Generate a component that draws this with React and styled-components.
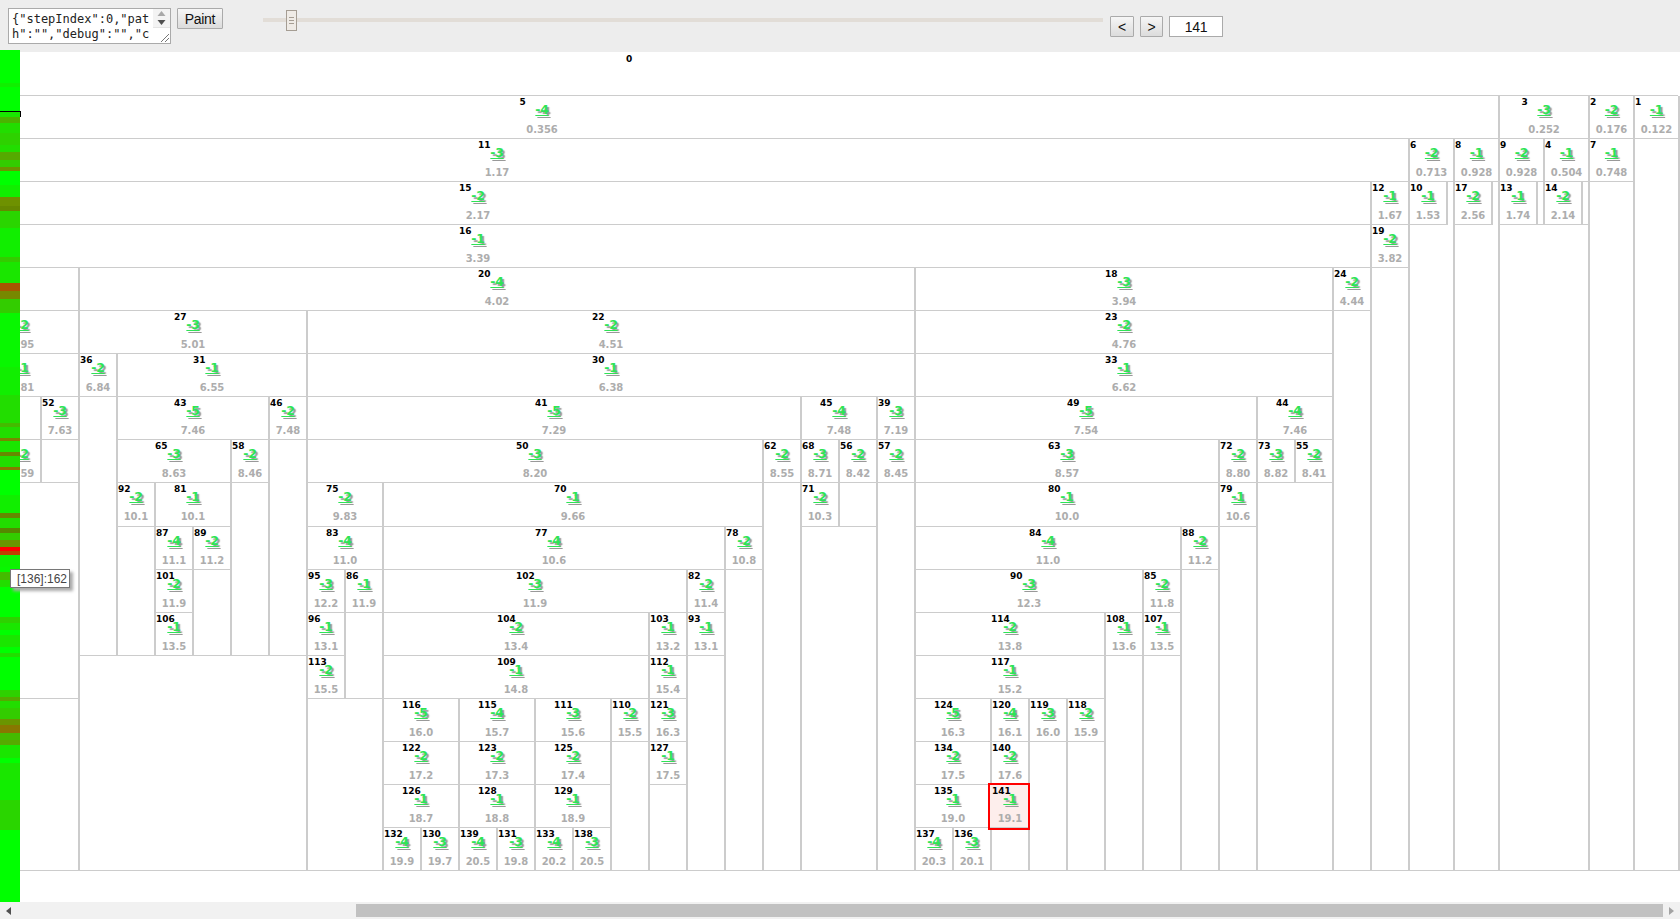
import React from 'react';
import styled, { createGlobalStyle } from 'styled-components';

const GlobalStyle = createGlobalStyle`
  html, body {
    margin: 0;
    padding: 0;
    overflow: hidden;
    background: #fff;
    font-family: "Liberation Sans", Arial, sans-serif;
  }
`;

const LINE = '#cccccc';

const Page = styled.div`
  position: relative;
  display: flex;
  flex-direction: column;
  width: 1680px;
  height: 919px;
  overflow: hidden;
`;

/* ---------- top toolbar ---------- */

const Toolbar = styled.div`
  flex: 0 0 52px;
  display: flex;
  align-items: flex-start;
  box-sizing: border-box;
  padding: 8px 0 0 8px;
  background: #ededed;
`;

const StateBox = styled.div`
  display: flex;
  box-sizing: border-box;
  width: 163px;
  height: 36px;
  border: 1px solid #aaa;
  background: #fff;
`;

const StateText = styled.textarea`
  flex: 1;
  min-width: 0;
  margin: 0;
  padding: 3px 0 0 3px;
  border: 0;
  outline: 0;
  resize: none;
  overflow: hidden;
  font: 12px/15px "DejaVu Sans Mono", monospace;
  color: #222;
  word-break: break-all;
`;

const StateScroll = styled.div`
  flex: 0 0 17px;
  display: flex;
  flex-direction: column;
  background: #f3f3f3;
`;

const ScrollArrows = styled.div`
  flex: 0 0 18px;
  display: flex;
  align-items: center;
  justify-content: center;
  border-bottom: 1px solid #e4e4e4;
`;

const Grip = styled.div`
  flex: 1;
  display: flex;
  align-items: flex-end;
  justify-content: flex-end;
  background: #fff;
`;

const Button = styled.button`
  box-sizing: border-box;
  width: ${p => p.$w}px;
  height: ${p => p.$h}px;
  margin: ${p => p.$top || 0}px 0 0 ${p => p.$left}px;
  padding: 0;
  border: 1px solid #aaa;
  border-radius: 1px;
  background: linear-gradient(#f6f6f6, #dcdcdc);
  color: #111;
  font: 14px "Liberation Sans", Arial, sans-serif;
  letter-spacing: -0.3px;
`;

const SliderTrack = styled.div`
  position: relative;
  width: 840px;
  height: 4px;
  margin: 10px 0 0 40px;
  background: #e2ddd7;
`;

const SliderThumb = styled.div`
  position: absolute;
  left: 23px;
  top: -8px;
  box-sizing: border-box;
  width: 11px;
  height: 21px;
  display: flex;
  flex-direction: column;
  align-items: center;
  justify-content: center;
  gap: 2px;
  border: 1px solid #a59d93;
  background: #efebe6;
`;

const ThumbLine = styled.span`
  width: 5px;
  height: 1px;
  background: #a59d93;
`;

const StepInput = styled.input`
  box-sizing: border-box;
  width: 54px;
  height: 21px;
  margin: 8px 0 0 6px;
  padding: 0;
  border: 1px solid #aaa;
  outline: 0;
  background: #fff;
  color: #111;
  text-align: center;
  font: 14px "Liberation Sans", Arial, sans-serif;
  letter-spacing: -0.3px;
`;

/* ---------- tree ---------- */

const Canvas = styled.div`
  flex: 1;
  min-height: 0;
  overflow: hidden;
  padding-top: 1px;
`;

const Tree = styled.div`
  margin-left: -416px;
  width: max-content;
`;

const Table = styled.div`
  display: flex;
  flex-direction: column;
  align-items: flex-start;
  width: max-content;
  min-width: 100%;
`;

const Label = styled.div`
  position: relative;
  box-sizing: border-box;
  align-self: stretch;
  flex: 0 0 43.055px;
  height: 43.055px;
  min-width: ${p => p.$min}px;
  padding-left: 2px;
  display: flex;
  justify-content: center;
  box-shadow: inset 0 -1px 0 ${LINE};
  ${p =>
    p.$selected &&
    `
    z-index: 2;
    background: #fdeeec;
    outline: 2px solid #f00;
    outline-offset: 0;
  `}
`;

const LabelBody = styled.div`
  position: relative;
  box-sizing: border-box;
  flex: 0 1 ${p => p.$min}px;
  min-width: 0;
  text-align: center;
`;

const NodeId = styled.span`
  position: absolute;
  left: 0;
  top: 2px;
  color: #000;
  font: bold 9px/9px "DejaVu Sans", Verdana, sans-serif;
  white-space: nowrap;
`;

const Score = styled.div`
  padding-top: 4px;
  height: 19px;
  color: #2ee455;
  font: bold 12.5px/19px "DejaVu Sans", Verdana, sans-serif;
  letter-spacing: -0.3px;
  text-decoration: underline;
  text-decoration-skip-ink: none;
  text-decoration-thickness: 1px;
  text-underline-offset: 1px;
  text-shadow: 2px 2px 1px #999;
  white-space: nowrap;
`;

const Value = styled.div`
  margin-top: 5px;
  color: #adadad;
  font: bold 10px/12px "DejaVu Sans", Verdana, sans-serif;
  white-space: nowrap;
`;

const Row = styled.div`
  display: flex;
  align-self: flex-start;
  box-shadow: inset 0 -1px 0 ${LINE}, 2px 0 0 ${LINE};
`;

const Cell = styled.div`
  flex: 0 0 auto;
  display: flex;
  box-shadow: inset 2px 0 0 ${LINE};
`;

/* ---------- heat strip, tooltip, scrollbar ---------- */

const Heat = styled.div`
  position: absolute;
  left: 0;
  top: 50px;
  width: 20px;
  height: 852px;
  display: flex;
  flex-direction: column;
  z-index: 5;
`;

const Stripe = styled.div`
  flex: 0 0 ${p => p.$h}px;
  background: ${p => p.$c};
`;

const HeatMarker = styled.div`
  position: absolute;
  left: 0;
  top: 61px;
  width: 20px;
  height: 5px;
  border-top: 1px solid #000;
  border-right: 1px solid #000;
`;

const Tooltip = styled.div`
  position: absolute;
  left: 10px;
  top: 569px;
  box-sizing: border-box;
  width: 60px;
  height: 19px;
  padding-left: 6px;
  border: 1px solid #777;
  background: #fff;
  color: #444;
  font: 12px/18px "Liberation Sans", Arial, sans-serif;
  box-shadow: 3px 3px 3px #aaa;
  z-index: 6;
`;

const HScroll = styled.div`
  flex: 0 0 17px;
  display: flex;
  align-items: center;
  background: #f1f1f1;
`;

const HArrow = styled.div`
  flex: 0 0 17px;
  display: flex;
  justify-content: center;
`;

const HTrack = styled.div`
  flex: 1;
  display: flex;
  justify-content: flex-end;
`;

const HThumb = styled.div`
  width: 1307px;
  height: 13px;
  background: #c1c1c1;
`;

const STRIPES = [
  [83, '#00ff00'], [87, '#10ef00'], [111, '#00ff00'], [117, '#1ae600'], [123, '#4ab400'],
  [133, '#22dd00'], [145, '#2ed100'], [152, '#22dd00'], [160, '#55aa00'], [167, '#33cc00'],
  [171, '#6a9500'], [185, '#00ff00'], [197, '#11ee00'], [206, '#6e9100'], [211, '#668800'],
  [228, '#2ad500'], [257, '#11ee00'], [262, '#33cc00'], [283, '#1ae600'], [291, '#a85700'],
  [299, '#778800'], [313, '#33cc00'], [367, '#08f700'], [395, '#11ee00'], [423, '#22dd00'],
  [427, '#44bb00'], [438, '#22dd00'], [441, '#7a8500'], [452, '#1ae600'], [456, '#668800'],
  [467, '#22dd00'], [470, '#887700'], [495, '#00ff00'], [513, '#11ee00'], [518, '#668800'],
  [528, '#22dd00'], [533, '#558800'], [540, '#33cc00'], [547, '#6a9500'], [551, '#ff0000'],
  [555, '#c04000'], [567, '#0cf300'], [572, '#08f700'], [580, '#44bb00'], [587, '#22dd00'],
  [617, '#00ff00'], [623, '#2ed100'], [630, '#1ae600'], [635, '#00ff00'], [647, '#1ae600'],
  [653, '#00ff00'], [657, '#22dd00'], [690, '#00ff00'], [697, '#2ed100'], [701, '#55aa00'],
  [708, '#22dd00'], [719, '#33cc00'], [725, '#6a9500'], [733, '#887700'], [740, '#44bb00'],
  [745, '#55aa00'], [758, '#1ae600'], [763, '#00ff00'], [780, '#1ae600'], [800, '#11ee00'],
  [830, '#2ad500'], [902, '#00ff00']
];

const n = (id, score, value, kids = []) => ({ id, score, value, kids });

// columns left of the strip are scrolled out of view, only their size counts here
const offscreen = (depth, w) => ({ w, kids: depth > 1 ? [offscreen(depth - 1, w)] : [] });

const ROOT = n(0, '', '', [
  n(5, '-4', '0.356', [
    n(11, '-3', '1.17', [
      n(15, '-2', '2.17', [
        n(16, '-1', '3.39', [
          {
            kids: [
              offscreen(9, 380),
              n(25, '-2', '4.95', [
                n(29, '-1', '5.81', [
                  {
                    kids: [
                      { w: 38, kids: [] },
                      n(54, '-2', '8.59')
                    ]
                  },
                  n(52, '-3', '7.63')
                ])
              ])
            ]
          },
          n(20, '-4', '4.02', [
            n(27, '-3', '5.01', [
              n(36, '-2', '6.84'),
              n(31, '-1', '6.55', [
                n(43, '-5', '7.46', [
                  n(65, '-3', '8.63', [
                    n(92, '-2', '10.1'),
                    n(81, '-1', '10.1', [
                      n(87, '-4', '11.1', [
                        n(101, '-2', '11.9', [n(106, '-1', '13.5')])
                      ]),
                      n(89, '-2', '11.2')
                    ])
                  ]),
                  n(58, '-2', '8.46')
                ]),
                n(46, '-2', '7.48')
              ])
            ]),
            n(22, '-2', '4.51', [
              n(30, '-1', '6.38', [
                n(41, '-5', '7.29', [
                  n(50, '-3', '8.20', [
                    n(75, '-2', '9.83', [
                      n(83, '-4', '11.0', [
                        n(95, '-3', '12.2', [
                          n(96, '-1', '13.1', [n(113, '-2', '15.5')])
                        ]),
                        n(86, '-1', '11.9')
                      ])
                    ]),
                    n(70, '-1', '9.66', [
                      n(77, '-4', '10.6', [
                        n(102, '-3', '11.9', [
                          n(104, '-2', '13.4', [
                            n(109, '-1', '14.8', [
                              n(116, '-5', '16.0', [
                                n(122, '-2', '17.2', [
                                  n(126, '-1', '18.7', [
                                    n(132, '-4', '19.9'),
                                    n(130, '-3', '19.7')
                                  ])
                                ])
                              ]),
                              n(115, '-4', '15.7', [
                                n(123, '-2', '17.3', [
                                  n(128, '-1', '18.8', [
                                    n(139, '-4', '20.5'),
                                    n(131, '-3', '19.8')
                                  ])
                                ])
                              ]),
                              n(111, '-3', '15.6', [
                                n(125, '-2', '17.4', [
                                  n(129, '-1', '18.9', [
                                    n(133, '-4', '20.2'),
                                    n(138, '-3', '20.5')
                                  ])
                                ])
                              ]),
                              n(110, '-2', '15.5')
                            ])
                          ]),
                          n(103, '-1', '13.2', [
                            n(112, '-1', '15.4', [
                              n(121, '-3', '16.3', [n(127, '-1', '17.5')])
                            ])
                          ])
                        ]),
                        n(82, '-2', '11.4', [n(93, '-1', '13.1')])
                      ]),
                      n(78, '-2', '10.8')
                    ])
                  ]),
                  n(62, '-2', '8.55')
                ]),
                n(45, '-4', '7.48', [
                  n(68, '-3', '8.71', [n(71, '-2', '10.3')]),
                  n(56, '-2', '8.42')
                ]),
                n(39, '-3', '7.19', [n(57, '-2', '8.45')])
              ])
            ])
          ]),
          n(18, '-3', '3.94', [
            n(23, '-2', '4.76', [
              n(33, '-1', '6.62', [
                n(49, '-5', '7.54', [
                  n(63, '-3', '8.57', [
                    n(80, '-1', '10.0', [
                      n(84, '-4', '11.0', [
                        n(90, '-3', '12.3', [
                          n(114, '-2', '13.8', [
                            n(117, '-1', '15.2', [
                              n(124, '-5', '16.3', [
                                n(134, '-2', '17.5', [
                                  n(135, '-1', '19.0', [
                                    n(137, '-4', '20.3'),
                                    n(136, '-3', '20.1')
                                  ])
                                ])
                              ]),
                              n(120, '-4', '16.1', [
                                n(140, '-2', '17.6', [n(141, '-1', '19.1')])
                              ]),
                              n(119, '-3', '16.0'),
                              n(118, '-2', '15.9')
                            ])
                          ]),
                          n(108, '-1', '13.6')
                        ]),
                        n(85, '-2', '11.8', [n(107, '-1', '13.5')])
                      ]),
                      n(88, '-2', '11.2')
                    ])
                  ]),
                  n(72, '-2', '8.80', [n(79, '-1', '10.6')])
                ]),
                n(44, '-4', '7.46', [n(73, '-3', '8.82'), n(55, '-2', '8.41')])
              ])
            ])
          ]),
          n(24, '-2', '4.44')
        ])
      ]),
      n(12, '-1', '1.67', [n(19, '-2', '3.82')])
    ]),
    n(6, '-2', '0.713', [n(10, '-1', '1.53')]),
    n(8, '-1', '0.928', [n(17, '-2', '2.56')])
  ]),
  n(3, '-3', '0.252', [
    n(9, '-2', '0.928', [n(13, '-1', '1.74')]),
    n(4, '-1', '0.504', [n(14, '-2', '2.14')])
  ]),
  n(2, '-2', '0.176', [n(7, '-1', '0.748')]),
  n(1, '-1', '0.122')
]);

const labelWidth = node => {
  if (node.w) return node.w;
  if (!node.value) return 12;
  return node.value.length >= 5 ? 45 : 38;
};

const TreeNode = ({ node }) => {
  const min = labelWidth(node);
  return (
    <Table>
      <Label $min={min} $selected={node.id === 141}>
        {node.id !== undefined && (
          <LabelBody $min={min}>
            <NodeId>{node.id}</NodeId>
            {node.score && <Score>{node.score}</Score>}
            {node.value && <Value>{node.value}</Value>}
          </LabelBody>
        )}
      </Label>
      {node.kids.length > 0 && (
        <Row>
          {node.kids.map((kid, i) => (
            <Cell key={i}>
              <TreeNode node={kid} />
            </Cell>
          ))}
        </Row>
      )}
    </Table>
  );
};

const stripes = STRIPES.map(([end, color], i) => ({
  h: end - (i ? STRIPES[i - 1][0] : 50),
  color
}));

const App = () => (
  <Page>
    <GlobalStyle />
    <Toolbar>
      <StateBox>
        <StateText readOnly spellCheck={false} defaultValue={'{"stepIndex":0,"path":"","debug":"","c'} />
        <StateScroll>
          <ScrollArrows>
            <svg width="9" height="14" viewBox="0 0 9 14">
              <polygon points="4.5,0 8.5,5 0.5,5" fill="#a8a8a8" />
              <polygon points="0.5,9 8.5,9 4.5,14" fill="#505050" />
            </svg>
          </ScrollArrows>
          <Grip>
            <svg width="10" height="10" viewBox="0 0 10 10">
              <path d="M1 9 L9 1 M5 9 L9 5" stroke="#777" strokeWidth="1" fill="none" />
            </svg>
          </Grip>
        </StateScroll>
      </StateBox>
      <Button $w={46} $h={21} $left={6}>Paint</Button>
      <SliderTrack>
        <SliderThumb>
          <ThumbLine />
          <ThumbLine />
          <ThumbLine />
        </SliderThumb>
      </SliderTrack>
      <Button $w={24} $h={21} $left={7} $top={8}>&lt;</Button>
      <Button $w={23} $h={21} $left={6} $top={8}>&gt;</Button>
      <StepInput readOnly value="141" />
    </Toolbar>
    <Canvas>
      <Tree>
        <TreeNode node={ROOT} />
      </Tree>
    </Canvas>
    <HScroll>
      <HArrow>
        <svg width="5" height="8" viewBox="0 0 5 8">
          <polygon points="5,0 5,8 0,4" fill="#505050" />
        </svg>
      </HArrow>
      <HTrack>
        <HThumb />
      </HTrack>
      <HArrow>
        <svg width="5" height="8" viewBox="0 0 5 8">
          <polygon points="0,0 0,8 5,4" fill="#a3a3a3" />
        </svg>
      </HArrow>
    </HScroll>
    <Heat>
      {stripes.map((s, i) => (
        <Stripe key={i} $h={s.h} $c={s.color} />
      ))}
      <HeatMarker />
    </Heat>
    <Tooltip>[136]:162</Tooltip>
  </Page>
);

export default App;
